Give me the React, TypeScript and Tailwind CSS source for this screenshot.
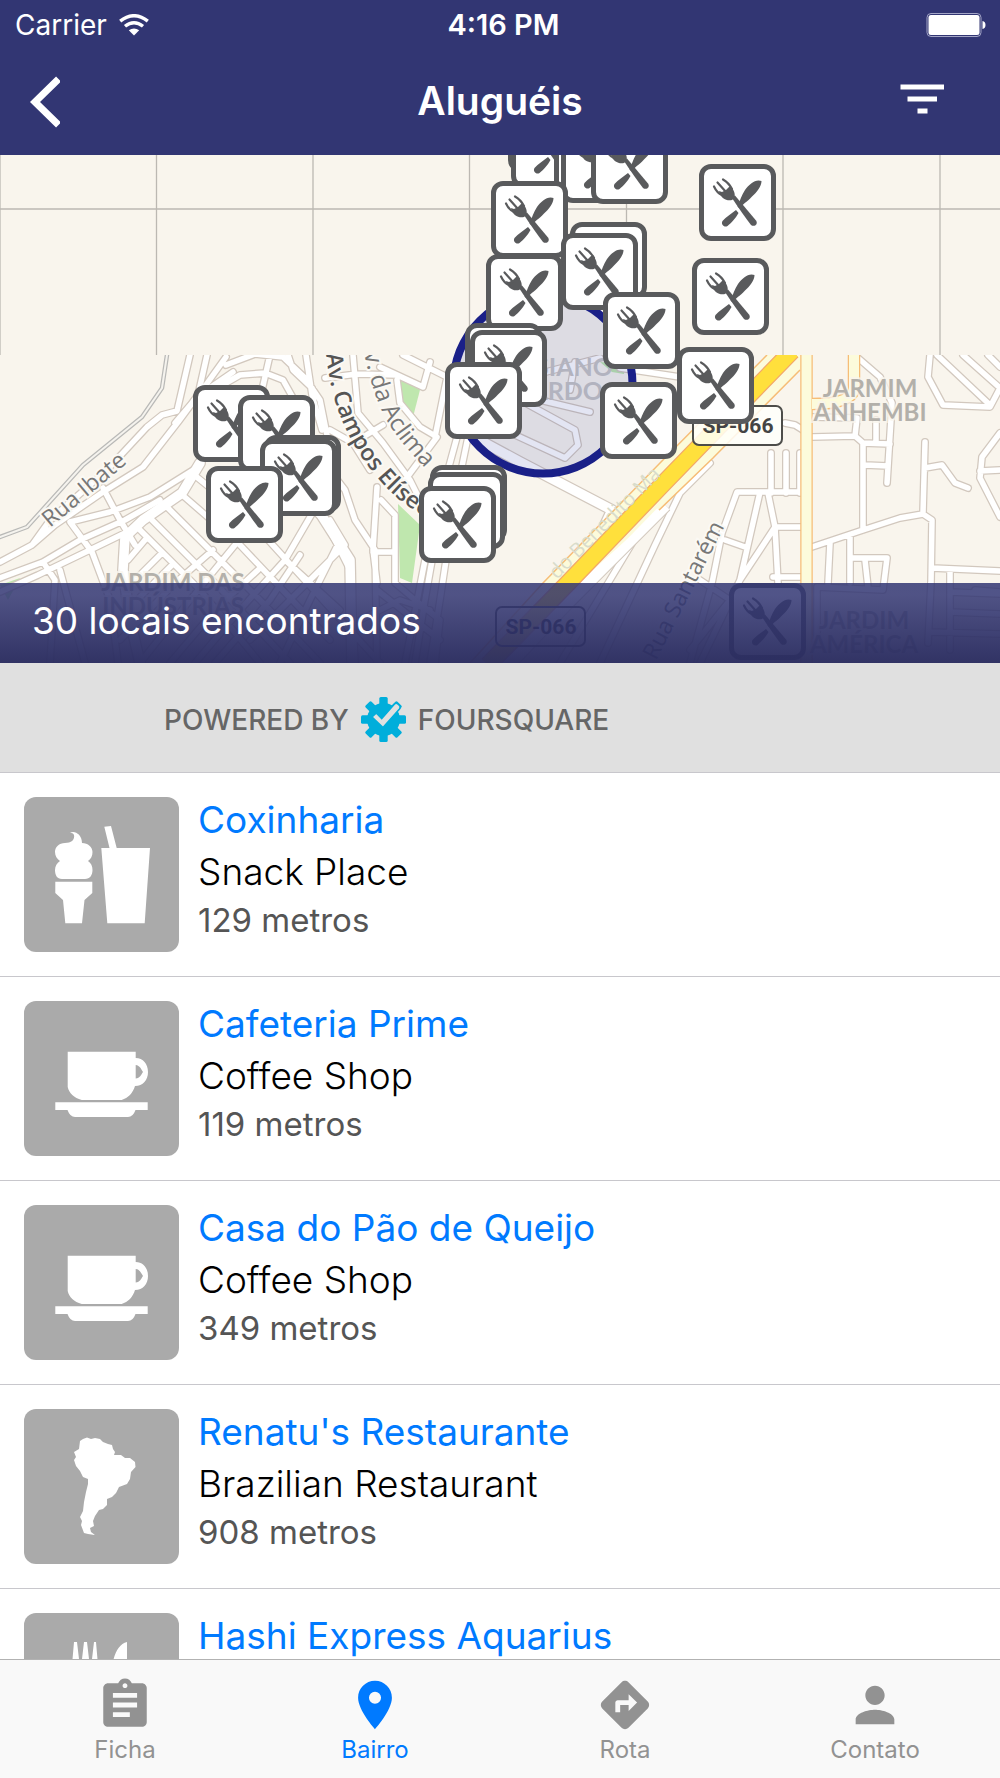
import React from 'react';
import { MdAssignment, MdLocationOn, MdDirections, MdPerson } from 'react-icons/md';

const places = [
  { name: 'Coxinharia', category: 'Snack Place', distance: '129 metros', icon: 'snack' },
  { name: 'Cafeteria Prime', category: 'Coffee Shop', distance: '119 metros', icon: 'coffee' },
  { name: 'Casa do Pão de Queijo', category: 'Coffee Shop', distance: '349 metros', icon: 'coffee' },
  { name: "Renatu's Restaurante", category: 'Brazilian Restaurant', distance: '908 metros', icon: 'brazil' },
  { name: 'Hashi Express Aquarius', category: 'Japanese Restaurant', distance: '412 metros', icon: 'food' },
];

// x, y of the top left corner on the map, back to front
const pins = [
  [508, -60], [511, -44], [554, -38], [561, -29], [591, -28], [491, 26],
  [699, 9], [692, 103], [570, 67], [561, 78], [486, 99], [603, 137],
  [465, 168], [470, 175], [445, 207], [677, 192], [600, 227],
  [193, 230], [238, 240], [264, 280], [260, 284], [206, 311],
  [430, 310], [428, 317], [419, 331], [729, 428],
];

const tabs = [
  { label: 'Ficha', Icon: MdAssignment, active: false },
  { label: 'Bairro', Icon: MdLocationOn, active: true },
  { label: 'Rota', Icon: MdDirections, active: false },
  { label: 'Contato', Icon: MdPerson, active: false },
];

const streets = [
  // west side
  'M190 355L177 411L162 415L147 427L107 470L50 520L32 545L0 562',
  'M207 355L198 395L178 422L143 467L103 492L55 525L32 545',
  'M226 357L198 396M233 372L198 396L175 423',
  'M226 365L255 354L283 357L305 378L320 400L328 440',
  'M270 355L262 390M205 395L240 375L265 373L283 380L297 405L310 440',
  'M306 355L312 395L322 430',
  'M288 355L293 370L312 388',
  'M103 488L120 520L135 545',
  'M198 467L150 497L110 512L70 522',
  'M0 578L43 562L80 540L125 520L160 500',
  'M0 592L38 575L90 550L125 533',
  'M70 522L92 552L110 600L118 663',
  'M43 562L55 580L50 663M60 570L85 663',
  'M140 530L165 555L200 590L260 663',
  'M152 520L215 583L290 663',
  'M167 507L260 600L320 663',
  'M180 493L240 545L330 640',
  'M193 474L250 520L380 663',
  'M213 550L175 583L120 640M235 545L190 600L140 663',
  'M258 570L215 610L170 663M285 560L240 610L195 663',
  'M300 555L270 600L215 663M320 500L285 560L340 610',
  'M145 540L128 560M160 555L135 580M172 565L140 597',
  'M330 520L345 545L300 590L250 640M340 540L310 600L280 663',
  // centre
  'M353 355L358 413L383 443L410 480L420 500',
  'M322 460L345 490L355 520L375 550L377 663',
  'M300 500L325 520L350 570L355 663',
  'M377 487L373 550L377 583M373 552L395 552',
  'M381 500L395 515L395 583L415 600L440 620L435 663',
  'M325 378L357 374L397 375',
  'M380 367L423 387L430 362',
  'M397 380L400 403L420 427L437 437L405 480',
  'M403 355L447 377L435 437',
  'M353 443L383 425M330 430L353 443L370 470',
  'M457 437L448 470L425 600L415 663',
  'M468 437L455 500L440 600L430 663',
  'M425 560L405 663M377 590L440 640M360 620L400 600L430 610',
  // east side
  'M930 355L928 377L943 405L990 407L1000 388',
  'M937 355L990 405M963 355L1000 388M988 355L1000 367',
  'M858 358L880 377L892 403L887 483',
  'M812 437L855 436L863 443L863 530',
  'M863 443L890 444M865 465L888 466',
  'M812 417L857 418L855 436M876 420L876 443',
  'M925 442L923 513M925 468L942 465L955 483L968 488',
  'M812 547L863 530L900 518L923 514L932 520L931 583L928 643',
  'M932 568L1000 571M1000 433L982 457L980 478L1000 517M980 471L1000 470',
  'M830 543L828 583M850 537L850 583M850 558L887 558L883 590L817 587',
  'M865 560L868 587M950 570L950 650M975 590L1000 592M950 592L1000 594M950 612L1000 614M930 632L1000 634M817 587L817 640',
  'M785 423L795 425L803 430M771 453L771 493M786 453L786 493M800 453L800 493',
  'M800 492L737 492L722 533L712 583L690 663',
  'M760 492L740 580L700 663M768 493L775 527L778 583',
  'M802 527L775 527L740 580M725 540L745 547M773 577L802 577M700 580L730 600L690 650',
  'M710 463L680 493L655 545L600 663M640 530L560 663',
  'M620 368L700 380',
  // inside the circle
  'M500 370L540 400L590 412M515 380L600 358M575 362L570 390M520 400L575 430L578 445L565 458L500 428',
];

const avenues = 'M470 435L520 462L612 510L605 525M200 463L182 493L143 520L125 537L123 570L130 620L140 663M315 505L350 560L352 663';

function SiteMap() {
  return (
    <svg className="block w-full h-full" viewBox="0 155 1000 508" preserveAspectRatio="xMidYMid slice" aria-label="Mapa">
      <defs>
        <path id="campos" d="M326 354C331 402 346 438 372 471S412 508 440 526" />
        <path id="aclima" d="M361 338C370 384 378 408 393 430S418 460 456 500" />
        <clipPath id="loaded">
          <rect x="0" y="355" width="1000" height="308" />
        </clipPath>
      </defs>
      <rect x="0" y="155" width="1000" height="508" fill="#f9f5ed" />
      <path d="M0 155V355M156.500 155V355M313 155V355M469.500 155V355M626.500 155V355M783 155V355M940 155V355M0 209H1000" stroke="#bcb8b2" fill="none" strokeWidth="1.300" />
      <g clipPath="url(#loaded)">
        <path d="M400 378L421 386L413 417L403 402Z" fill="#bfe7ae" />
        <path d="M398 504L420 525L412 583L400 578ZM0 585L20 578L8 600Z" fill="#bfe7ae" />
        <path d="M600 362L625 364L624 374L612 372Z" fill="#bfe7ae" />
        <g fill="none" strokeLinejoin="round" strokeLinecap="round">
          <path d={streets.join('')} stroke="#d2c8be" strokeWidth="8" />
          <path d={avenues} stroke="#d2c8be" strokeWidth="12" />
          <path d={streets.join('')} stroke="#fff" strokeWidth="5.500" />
          <path d={avenues} stroke="#fff" strokeWidth="9.500" />
          <path d="M167 355L162 388L142 417L83 465L27 527L0 537" stroke="#b9b9b7" strokeWidth="4.500" />
          <path d="M167 355L162 388L142 417L83 465L27 527L0 537" stroke="#f5f3ee" strokeWidth="2" />
        </g>

        {/* highway and its side lanes */}
        <path d="M660 500L560 600L500 663" stroke="#d2c8be" strokeWidth="29" fill="none" />
        <path d="M660 500L560 600L500 663" stroke="#fff" strokeWidth="27" fill="none" />
        <path d="M767 355L660 463L543 583L470 663L490 663L655 514L713 458L802 368V355Z" fill="#fcfbdb" />
        <path d="M767 355L660 463L543 583L470 663M655 514L713 458L800 370" stroke="#f6bd77" strokeWidth="1.500" fill="none" />
        <path d="M590 583L660 511" stroke="#fff" strokeWidth="8" />
        <path d="M792 351L660 487L568 583L488 665" stroke="#f3a869" strokeWidth="18" fill="none" />
        <path d="M792 351L660 487L568 583L488 665" stroke="#ffe03c" strokeWidth="15.500" fill="none" />
        <path d="M854 350V390Q850 404 812 404M806.500 350V663" stroke="#f6bd77" strokeWidth="12.500" fill="none" />
        <path d="M854 350V390Q850 404 812 404M806.500 350V663" stroke="#fcfbdb" strokeWidth="10" fill="none" />
      </g>

      <circle cx="543" cy="384" r="89.500" fill="#1a2ca0" fillOpacity="0.120" stroke="#1a2088" strokeWidth="8" />

      <g className="font-['Lato',sans-serif] font-bold" fontSize="24" fill="#b3b0aa" stroke="#f9f5ed" strokeWidth="4" strokeOpacity="0.800" paintOrder="stroke" textAnchor="middle">
        <text x="870" y="397">JARMIM</text>
        <text x="870" y="421">ANHEMBI</text>
        <text x="173" y="591">JARDIM DAS</text>
        <text x="173" y="615">INDÚSTRIAS</text>
        <text x="864" y="629">JARDIM</text>
        <text x="864" y="653">AMÉRICA</text>
      </g>
      <g className="font-['Lato',sans-serif] font-bold" fontSize="25" fill="#b2b3bf" textAnchor="end">
        <text x="613" y="376">CASSIANO</text>
        <text x="603" y="400">RICARDO</text>
      </g>
      <g className="font-['Open_Sans',sans-serif]" fill="#777" stroke="#fbf9f4" strokeWidth="4" paintOrder="stroke" fontSize="23">
        <text transform="translate(50 528) rotate(-40)">Rua Ibate</text>
        <text transform="translate(656 661) rotate(-63)">Rua Santarém</text>
        <g clipPath="url(#loaded)">
          <text fontSize="24"><textPath href="#aclima">Av. da Aclima</textPath></text>
          <text className="font-semibold" fill="#555"><textPath href="#campos">Av. Campos Elíseos</textPath></text>
        </g>
      </g>
      <text transform="translate(557 580) rotate(-45)" className="font-['Open_Sans',sans-serif]" fontSize="20" fill="#d9dccb">do Benedito Ma</text>
      <g className="font-['Liberation_Sans_Narrow','Roboto',sans-serif] font-bold" fontSize="21" textAnchor="middle">
        <rect x="693" y="406" width="89" height="39" rx="6" fill="#fffffa" fillOpacity="0.850" stroke="#4d4d4a" strokeWidth="2" />
        <text x="738" y="433" fill="#444">SP-066</text>
        <rect x="496" y="607" width="89" height="39" rx="6" fill="#fffffa" fillOpacity="0.400" stroke="#4d4d4a" strokeWidth="2" />
        <text x="541" y="634" fill="#333">SP-066</text>
      </g>
    </svg>
  );
}

function Pin({ x, y }: { x: number; y: number }) {
  return (
    <button
      type="button"
      aria-label="Restaurante"
      className="absolute w-[77px] h-[77px] rounded-xl border-[5px] border-[#595a5c] bg-white"
      style={{ left: `${x / 10}%`, top: y }}
    >
      <svg className="block w-full h-full" viewBox="5 5 67 67" fill="#595a5c">
        <path d="M62.500 17C57 14.500 50 20 46 26C42.500 31 41 37 38.500 42.500L40.500 44.500C43 40.500 48 38 53 32.500C58 28 62.500 22 62.500 17Z" />
        <path d="M37 46L39.500 49C37 54 32 59 28.500 62C25.500 64 21.500 60.500 23.500 57C27 53 33 49 37 46Z" />
        <path d="M33 34L36 31.500L57 56.500C59.500 60 55.500 63.500 52 61C46 53 39 43 33 34Z" />
        <path d="M20 27C21 34 28 37.500 33 36L35.500 34C36.500 30 35 25.500 31 22L27 26L23 28Z" />
        <path d="M15 22.500Q18 29 23 31M18.500 18.500L27 28M24 15.500Q30 19 33 25" stroke="#595a5c" strokeWidth="2.200" strokeLinecap="round" fill="none" />
      </svg>
    </button>
  );
}

function PlaceIcon({ icon }: { icon: string }) {
  return (
    <svg className="shrink-0 w-[155px] h-[155px] rounded-xl bg-[#aaa]" viewBox="0 0 155 155" fill="#fff" aria-hidden="true">
      {icon === 'snack' && (
        <>
          <path d="M46 36C50 33 58 37 58 46C64 46 68.500 50 68.500 55C68.500 59 67 62 64 64C67 66 68.500 69 68.500 73C68.500 78 66 82 61 82H38C33 82 31 78 31 73C31 69 33 66 36 64C33 62 31 59 31 55C31 50 35 46 41 46C47 46 51 43 50 38C49 36 48 36 46 36Z" />
          <path d="M31.300 84.700H68.300V96L60.500 103L58 126.300H41.300L39 103L31.300 96Z" />
          <path d="M77.300 51H85.500L80.300 29.700L87 29L92.700 51H126L120.700 126.300H83.300Z" />
        </>
      )}
      {icon === 'coffee' && (
        <>
          <path fillRule="evenodd" d="M43.700 50.700H111.700V57C119 57 124 63 124 71C124 79 119 85 111 85C109 92 104 97 97.700 99H57.700C50 97 45 92 43.700 86ZM111.700 64V77.500C116 77 117 74 119 71C117 68 116 64.500 111.700 64Z" />
          <path d="M31.300 101.300H123.700V109H111.500Q109 116 104 116H51Q46 116 43.500 109H31.300Z" />
        </>
      )}
      {icon === 'brazil' && (
        <path d="M56 32L59 30L63 28.500L67 30L71 29L76 30L79 33L84 35L88 36L89 40L91 43L90 46L97 46L101 49L106 49L111 53L111.500 58L107 63L106 70L103 75L95 78L92 84L88 88L83 90L83 96L79 100L75 101L71 107L69 112L70 117L66 119L67 123L71 126L64 125L60 124L57 116L58 112L56 108L59 102L60 93L62 83L64 75L64 70L59 68L56 62L52 57L50 51L52 48L50 43L55 40Z" />
      )}
      {icon === 'food' && (
        <>
          <path d="M50 29H53L55 46H58L60 29H63L65 46H68L70 29H72L74 52Q74 60 66 64V126H57V64Q48 60 48 52Z" />
          <path d="M103 29V126H94V80H86C86 58 89 32 103 29Z" />
        </>
      )}
    </svg>
  );
}

export default function App() {
  return (
    <div className="flex flex-col h-screen overflow-hidden bg-white font-['Inter',sans-serif]">
      <header className="shrink-0 bg-[#323673] text-white">
        <div className="grid grid-cols-[1fr_auto_1fr] items-center h-[50px] pl-[15px] pr-2 text-[28px]">
          <div className="flex items-center gap-3">
            <span>Carrier</span>
            <svg className="w-[30px] h-[22px]" viewBox="0 0 30 22" fill="none" stroke="#fff" strokeWidth="3.400" aria-hidden="true">
              <path d="M1.200 7.200Q15 -3.800 28.800 7.200" />
              <path d="M6 12.300Q15 5 24 12.300" />
              <path d="M15 21.500L9.800 16.300Q15 12.500 20.200 16.300Z" fill="#fff" stroke="none" />
            </svg>
          </div>
          <span className="text-[29px] font-semibold">4:16 PM</span>
          <svg className="justify-self-end mr-1.5 w-[60px] h-6" viewBox="0 0 60 24" aria-hidden="true">
            <rect x="1" y="0.500" width="54" height="23" rx="4" fill="none" stroke="#a3a5c6" />
            <rect x="2.500" y="2" width="51" height="20" rx="2.500" fill="#fff" />
            <path d="M56.500 8Q59.500 8.500 59.500 12T56.500 16Z" fill="#fff" />
          </svg>
        </div>
        <div className="grid grid-cols-[1fr_auto_1fr] items-center h-[105px] pl-7 pr-14 pb-0.5">
          <button type="button" aria-label="Voltar" className="justify-self-start">
            <svg className="w-8 h-[52px]" viewBox="0 0 32 52" fill="none" stroke="#fff" strokeWidth="7">
              <path d="M30.500 3L7 26L30.500 49" />
            </svg>
          </button>
          <h1 className="pl-7 text-[39px] font-semibold">Aluguéis</h1>
          <button type="button" aria-label="Filtrar" className="justify-self-end">
            <svg className="w-11 h-[36px]" viewBox="0 0 44 36" fill="#fff">
              <path d="M0.500 0.500H44V5.500H0.500ZM7.500 12.500H37V17.500H7.500ZM17.500 24.500H27.500V29.500H17.500Z" />
            </svg>
          </button>
        </div>
      </header>

      <section className="relative shrink-0 h-[508px] overflow-hidden bg-[#f9f5ed]">
        <SiteMap />
        {pins.map(([x, y], i) => <Pin key={i} x={x} y={y} />)}
        <div className="absolute inset-x-0 bottom-0 flex items-center h-20 pl-8 pb-1 bg-linear-to-b from-[#323673]/85 from-15% to-[#2b2d60]/97">
          <p className="text-[37px] text-white">30 locais encontrados</p>
        </div>
      </section>

      <div className="flex shrink-0 items-center gap-3 h-[110px] pl-[164px] pt-1 border-b border-[#c8c7cc] bg-[#e0e0e0] text-[28px] font-medium text-[#666]">
        <span>POWERED BY</span>
        <svg className="w-[45px] h-[45px]" viewBox="0 0 45 45" aria-hidden="true">
          <g fill="#00aedb">
            <circle cx="22.500" cy="22.500" r="16.500" />
            <rect x="18.300" width="8.400" height="45" rx="1.500" />
            <rect x="18.300" width="8.400" height="45" rx="1.500" transform="rotate(45 22.500 22.500)" />
            <rect x="18.300" width="8.400" height="45" rx="1.500" transform="rotate(90 22.500 22.500)" />
            <rect x="18.300" width="8.400" height="45" rx="1.500" transform="rotate(135 22.500 22.500)" />
          </g>
          <path d="M11 20L15.300 16L20.700 21.500L33.500 7Q35 5.500 37 7L38.500 8.500Q40 10 38.500 12L22 30.500Z" fill="#e0e0e0" stroke="#00aedb" strokeWidth="1.600" />
        </svg>
        <span>FOURSQUARE</span>
      </div>

      <ul className="flex-1 min-h-0 overflow-hidden">
        {places.map((place) => (
          <li key={place.name} className="flex gap-[19px] h-[204px] pl-6 border-b border-[#c8c7cc]">
            <div className="pt-6"><PlaceIcon icon={place.icon} /></div>
            <div className="pt-[21px]">
              <a href="#" className="block text-[37px] leading-[52px] text-[#007aff]">{place.name}</a>
              <p className="text-[37px] leading-[52px] font-light text-black">{place.category}</p>
              <p className="text-[33px] leading-[44px] text-[#555]">{place.distance}</p>
            </div>
          </li>
        ))}
      </ul>

      <nav className="grid grid-cols-4 shrink-0 h-[119px] pt-4 border-t border-[#b2b2b2] bg-[#f9f9f9] text-[24px] leading-[32px]">
        {tabs.map(({ label, Icon, active }) => (
          <a key={label} href="#" className={active ? 'flex flex-col items-center text-[#007aff]' : 'flex flex-col items-center text-[#929292]'}>
            <Icon size={58} />
            <span>{label}</span>
          </a>
        ))}
      </nav>
    </div>
  );
}
